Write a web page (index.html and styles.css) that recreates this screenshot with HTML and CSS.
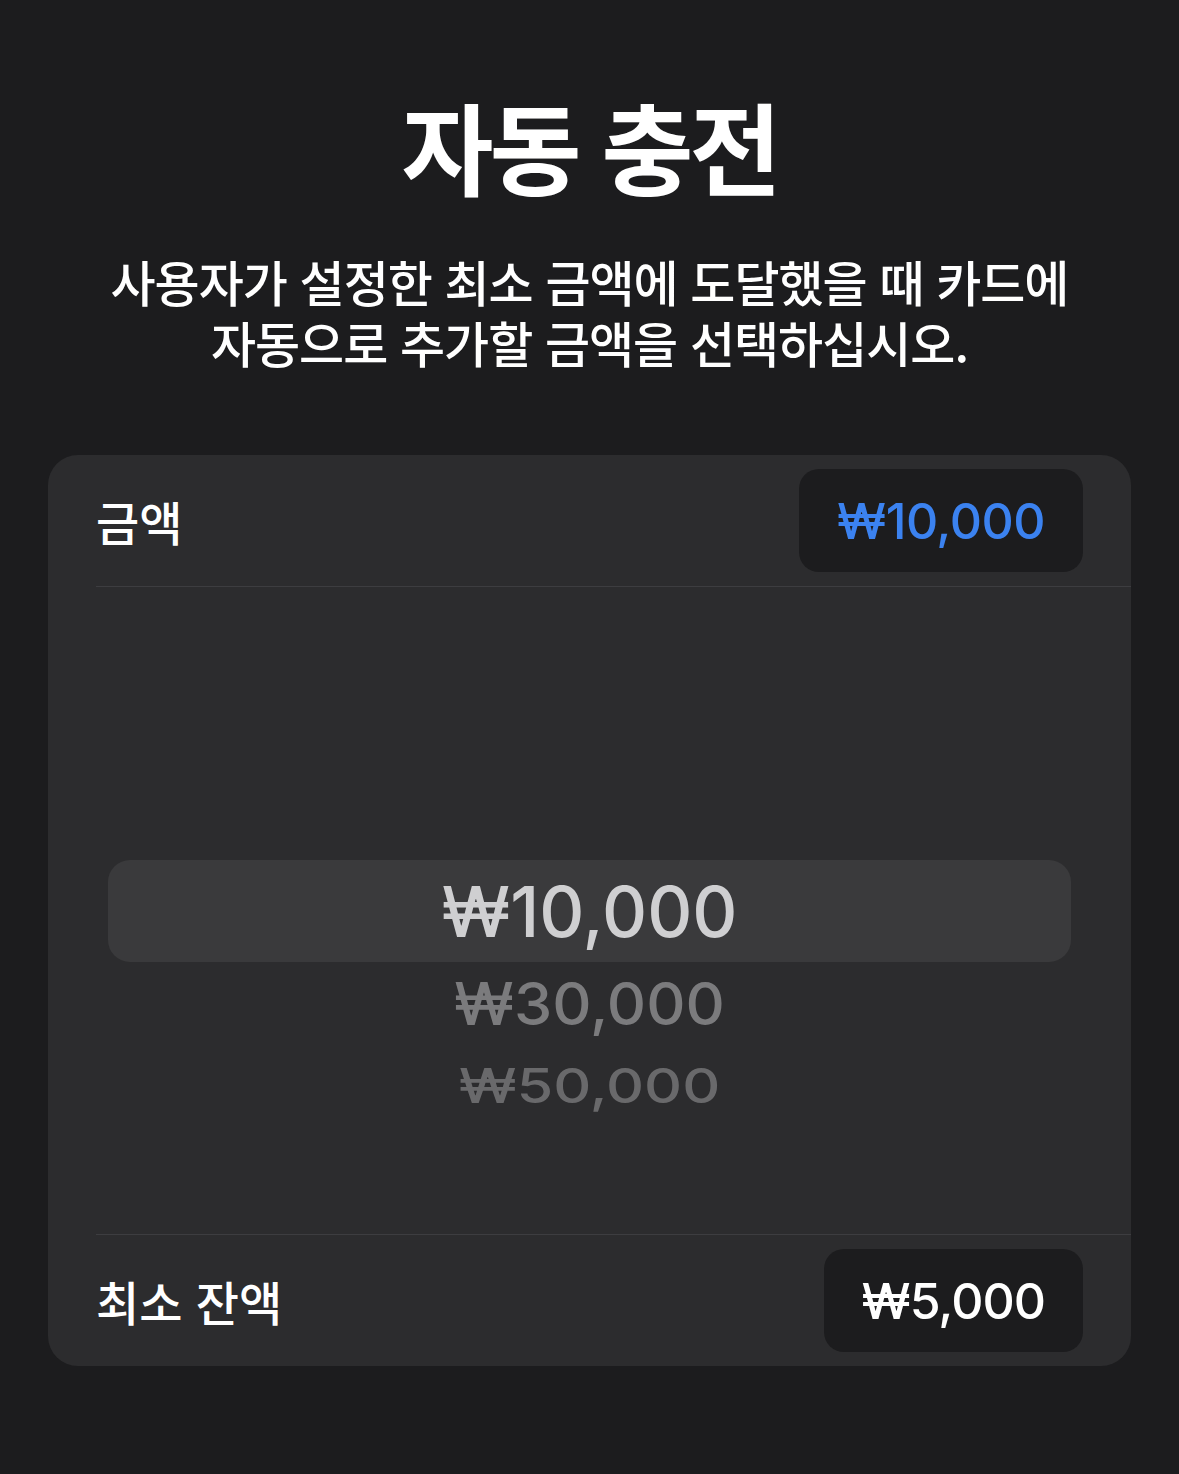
FILE: index.html
```html
<!DOCTYPE html>
<html lang="ko">
<head>
<meta charset="utf-8">
<link rel="stylesheet" href="styles.css">
</head>
<body>
<main class="page">
  <h1 class="title">자동 충전</h1>
  <p class="subtitle">사용자가 설정한 최소 금액에 도달했을 때 카드에<br>자동으로 추가할 금액을 선택하십시오.</p>
  <section class="card">
    <div class="row">
      <div class="row-inner">
        <span class="label">금액</span>
        <span class="pill pill-blue">₩10,000</span>
      </div>
    </div>
    <div class="picker">
      <div class="pick-selected">₩10,000</div>
      <div class="pick-item pick-2">₩30,000</div>
      <div class="pick-item pick-3">₩50,000</div>
    </div>
    <div class="row row-last">
      <div class="row-inner">
        <span class="label">최소 잔액</span>
        <span class="pill pill-white">₩5,000</span>
      </div>
    </div>
  </section>
</main>
</body>
</html>
```

FILE: styles.css
```css
html, body {
  margin: 0;
  padding: 0;
  background: #1c1c1e;
}
body {
  width: 1179px;
  height: 1474px;
  overflow: hidden;
  font-family: "Noto Sans CJK KR", "Noto Sans", sans-serif;
  color: #ffffff;
}
.page {
  display: flex;
  flex-direction: column;
  align-items: center;
}
.title {
  margin: 90px 0 0;
  font-size: 100px;
  line-height: 110px;
  font-weight: 700;
  letter-spacing: -4px;
  text-align: center;
}
.subtitle {
  margin: 50px 0 0;
  font-size: 49px;
  line-height: 61px;
  font-weight: 500;
  letter-spacing: -1px;
  text-align: center;
}
.card {
  margin-top: 83px;
  width: 1083px;
  background: #2c2c2e;
  border-radius: 30px;
  display: flex;
  flex-direction: column;
}
.row {
  padding-left: 48px;
}
.row-inner {
  height: 131px;
  padding-right: 48px;
  display: flex;
  align-items: center;
  justify-content: space-between;
  border-bottom: 1px solid #3d3d40;
}
.row-last .row-inner {
  border-bottom: none;
  border-top: 1px solid #3d3d40;
  height: 131px;
}
.label {
  font-size: 47px;
  font-weight: 500;
  letter-spacing: 0;
}
.pill {
  height: 103px;
  padding: 0 38px;
  border-radius: 20px;
  background: #1c1c1e;
  display: flex;
  align-items: center;
  font-family: Inter, "Noto Sans", sans-serif;
  font-size: 50px;
  font-weight: 500;
  letter-spacing: -0.5px;
}
.pill-blue { color: #3b82f0; }
.pill-white { color: #ffffff; letter-spacing: -1px; }
.picker {
  height: 647px;
  padding: 273px 60px 0;
  box-sizing: border-box;
  display: flex;
  flex-direction: column;
  align-items: center;
}
.pick-selected {
  align-self: stretch;
  height: 102px;
  border-radius: 22px;
  background: #3a3a3c;
  display: flex;
  align-items: center;
  justify-content: center;
  font-family: Inter, "Noto Sans", sans-serif;
  font-size: 70px;
  font-weight: 500;
  color: #cfcfd1;
}
.pick-item {
  font-family: Inter, "Noto Sans", sans-serif;
  font-weight: 500;
  line-height: 1;
}
.pick-2 {
  margin-top: 12px;
  font-size: 61px;
  color: #7b7b7d;
  transform: scaleY(0.97);
}
.pick-3 {
  margin-top: 21px;
  font-size: 59px;
  color: #69696b;
  transform: scaleY(0.81);
}
```
